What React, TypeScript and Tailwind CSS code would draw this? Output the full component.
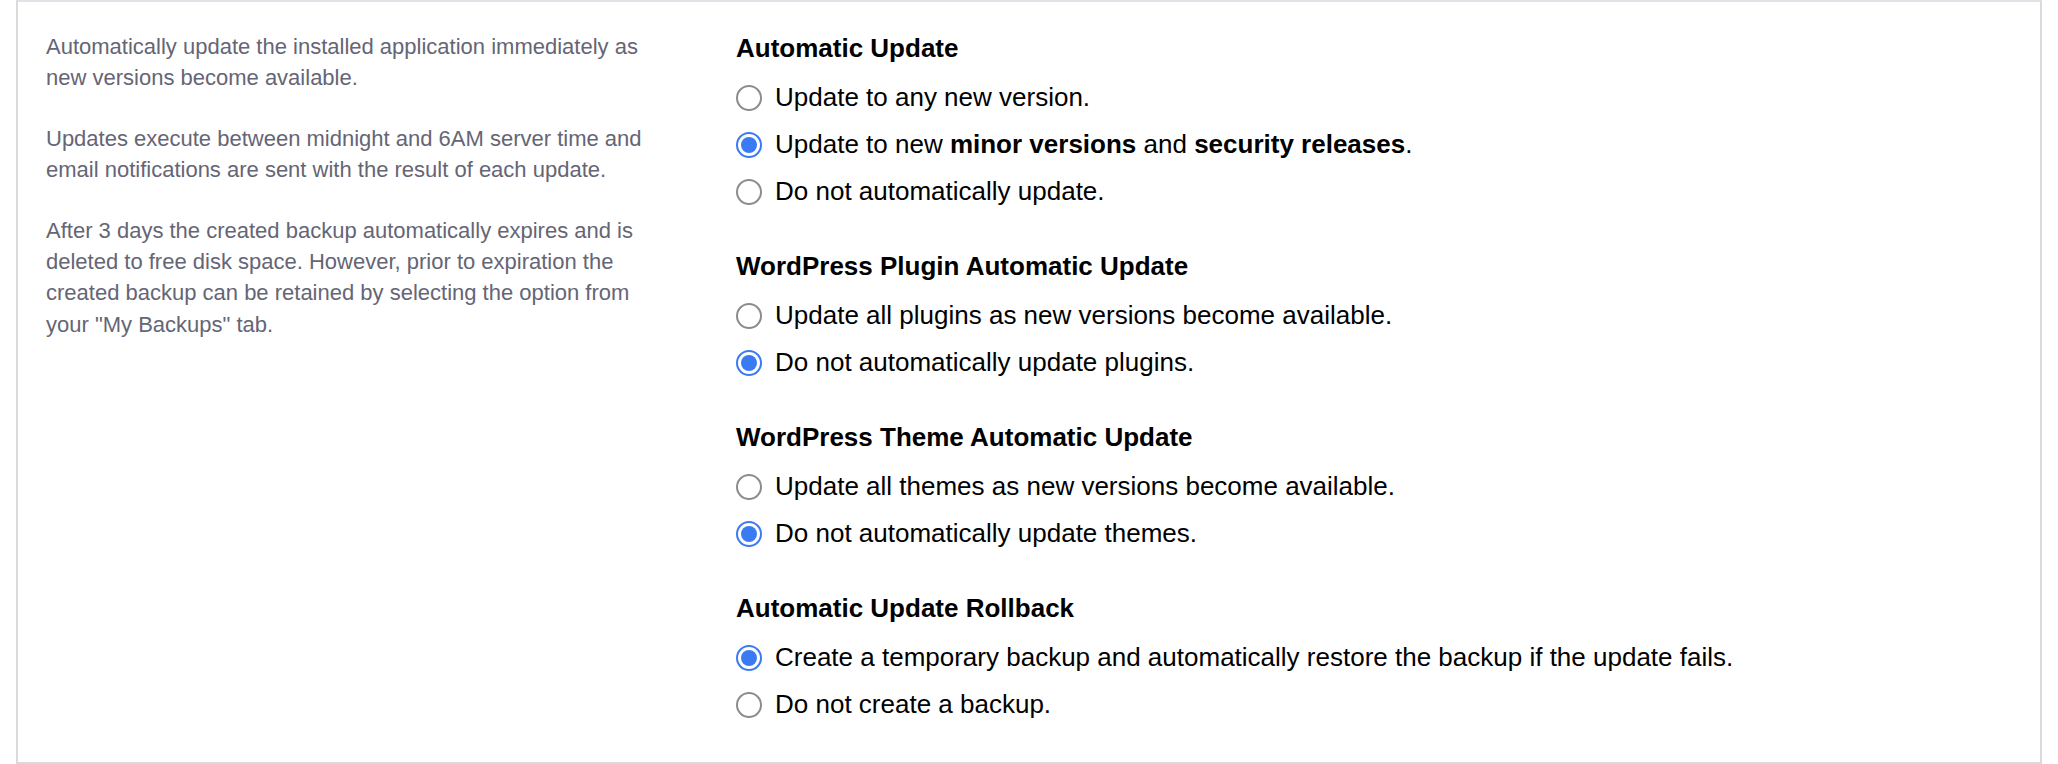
import React from "react";

type Opt = { label: React.ReactNode; checked?: boolean };
type Group = { title: string; options: Opt[] };

const groups: Group[] = [
  {
    title: "Automatic Update",
    options: [
      { label: "Update to any new version." },
      {
        label: (
          <>
            Update to new <b className="font-bold">minor versions</b> and{" "}
            <b className="font-bold">security releases</b>.
          </>
        ),
        checked: true,
      },
      { label: "Do not automatically update." },
    ],
  },
  {
    title: "WordPress Plugin Automatic Update",
    options: [
      { label: "Update all plugins as new versions become available." },
      { label: "Do not automatically update plugins.", checked: true },
    ],
  },
  {
    title: "WordPress Theme Automatic Update",
    options: [
      { label: "Update all themes as new versions become available." },
      { label: "Do not automatically update themes.", checked: true },
    ],
  },
  {
    title: "Automatic Update Rollback",
    options: [
      {
        label: "Create a temporary backup and automatically restore the backup if the update fails.",
        checked: true,
      },
      { label: "Do not create a backup." },
    ],
  },
];

function Radio({ checked }: { checked?: boolean }) {
  if (checked) {
    return (
      <span className="flex h-[26px] w-[26px] shrink-0 items-center justify-center rounded-full border-2 border-[#3a7bf3] bg-white">
        <span className="h-[16px] w-[16px] rounded-full bg-[#3a7bf3]" />
      </span>
    );
  }
  return <span className="h-[26px] w-[26px] shrink-0 rounded-full border-2 border-[#8c8c8c] bg-white" />;
}

export default function App() {
  return (
    <div className="h-[764px] w-[2058px] bg-white px-[16px] font-['Liberation_Sans',Arial,sans-serif]">
      <div className="flex h-full border-2 border-[#dadada] border-t-[#dfe3e8]">
        <div className="w-[718px] shrink-0 pl-[28px] pr-[78px] pt-[29px] text-[22px] leading-[31.4px] text-[#656575]">
          <p className="mb-[29px]">
            Automatically update the installed application immediately as new versions become available.
          </p>
          <p className="mb-[29px]">
            Updates execute between midnight and 6AM server time and email notifications are sent with the result of
            each update.
          </p>
          <p>
            After 3 days the created backup automatically expires and is deleted to free disk space. However, prior to
            expiration the created backup can be retained by selecting the option from your "My Backups" tab.
          </p>
        </div>
        <div className="flex-1 pt-[20px] text-[26px] text-black">
          {groups.map((g) => (
            <div key={g.title} className="mb-[25px]">
              <div className="flex h-[52px] items-center font-bold">{g.title}</div>
              {g.options.map((o, i) => (
                <label key={i} className="flex h-[47px] items-center gap-[13px]">
                  <Radio checked={o.checked} />
                  <span>{o.label}</span>
                </label>
              ))}
            </div>
          ))}
        </div>
      </div>
    </div>
  );
}
